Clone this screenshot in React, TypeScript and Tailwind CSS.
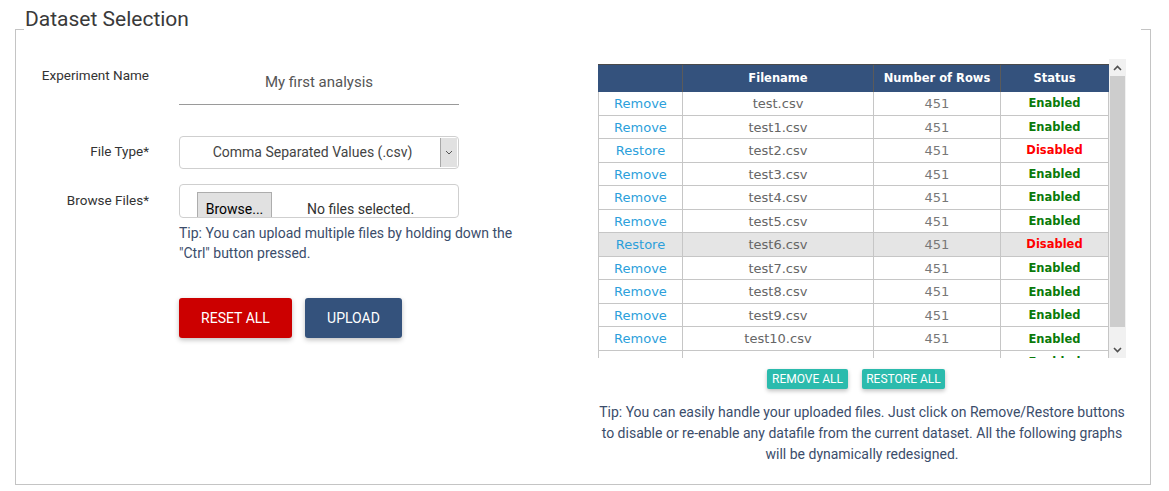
import React from "react";

const rows = [
  { action: "Remove", file: "test.csv", n: 451, on: true },
  { action: "Remove", file: "test1.csv", n: 451, on: true },
  { action: "Restore", file: "test2.csv", n: 451, on: false },
  { action: "Remove", file: "test3.csv", n: 451, on: true },
  { action: "Remove", file: "test4.csv", n: 451, on: true },
  { action: "Remove", file: "test5.csv", n: 451, on: true },
  { action: "Restore", file: "test6.csv", n: 451, on: false, hl: true },
  { action: "Remove", file: "test7.csv", n: 451, on: true },
  { action: "Remove", file: "test8.csv", n: 451, on: true },
  { action: "Remove", file: "test9.csv", n: 451, on: true },
  { action: "Remove", file: "test10.csv", n: 451, on: true },
  { action: "Remove", file: "test11.csv", n: 451, on: true },
];

export default function App() {
  return (
    <div className="w-[1169px] h-[491px] bg-white overflow-hidden font-['Roboto',sans-serif] text-[#333]">
      <div className="pl-[15px] pr-[18px]">
        {/* legend row */}
        <div className="flex h-[30px]">
          <div className="w-[9px] h-px mt-auto bg-[#c4c4c4]" />
          <div className="flex-1 pt-[6px] pl-px text-[21px] leading-[26px] text-[#3a3a3a]">Dataset Selection</div>
          <div className="w-[10px] h-px mt-auto bg-[#c4c4c4]" />
        </div>
        {/* box */}
        <div className="h-[455px] border-l border-r border-b border-[#c4c4c4] flex">
          {/* left column */}
          <div className="w-[567px] pt-[30px]">
            <div className="flex">
              <div className="w-[133px] text-right text-[13.5px] leading-[18px] pt-[6px] text-[#333]">Experiment Name</div>
              <div className="ml-[30px] w-[280px] h-[45px] border-b border-[#9a9a9a] flex items-center justify-center text-[15px] text-[#555]">
                My first analysis
              </div>
            </div>
            <div className="flex mt-[31px]">
              <div className="w-[133px] text-right text-[13.5px] leading-[18px] pt-[6px]">File Type*</div>
              <div className="ml-[30px] w-[280px] h-[33px] border border-[#cfcfcf] rounded-[4px] flex overflow-hidden">
                <div className="flex-1 flex items-center justify-center text-[14px] text-[#444] pl-[5px]">Comma Separated Values (.csv)</div>
                <div className="w-[17px] my-[1px] mr-[1px] bg-[#e1e1e1] border-l border-[#a8a8a8] flex items-center justify-center">
                  <svg width="8" height="5" viewBox="0 0 8 5">
                    <path d="M1 1 L4 4 L7 1" fill="none" stroke="#555" strokeWidth="1" />
                  </svg>
                </div>
              </div>
            </div>
            <div className="flex mt-[15px]">
              <div className="w-[133px] text-right text-[13.5px] leading-[18px] pt-[7px]">Browse Files*</div>
              <div className="ml-[30px]">
                <div className="w-[280px] h-[34px] border border-[#cfcfcf] rounded-[4px] overflow-hidden pt-[7px] pl-[17px] flex items-start">
                  <div className="w-[75px] h-[32px] bg-[#e1e1e1] border border-[#adadad] text-[14px] text-black flex items-start justify-center pt-[7px] leading-[18px]">
                    Browse...
                  </div>
                  <div className="ml-[35px] text-[14px] leading-[18px] pt-[8px] text-[#333]">No files selected.</div>
                </div>
                <div className="mt-[5px] text-[14px] leading-[20px] text-[#3b4d6b]">
                  Tip: You can upload multiple files by holding down the
                  <br />
                  "Ctrl" button pressed.
                </div>
                <div className="flex gap-[13px] mt-[35px]">
                  <div className="w-[113px] h-[40px] bg-[#cc0000] rounded-[3px] text-white text-[14px] flex items-center justify-center shadow-[0_2px_5px_rgba(0,0,0,0.25)]">
                    RESET ALL
                  </div>
                  <div className="w-[97px] h-[40px] bg-[#34527c] rounded-[3px] text-white text-[14px] flex items-center justify-center shadow-[0_2px_5px_rgba(0,0,0,0.25)]">
                    UPLOAD
                  </div>
                </div>
              </div>
            </div>
          </div>
          {/* right column */}
          <div className="pl-[15px] pt-[29px]">
            <div className="w-[528px] h-[299px] flex">
              <div className="w-[511px] h-full overflow-hidden pt-[5px] font-['DejaVu_Sans',sans-serif]">
                <div className="flex h-[28px] bg-[#34527d] border-t border-[#4a4a4a] text-white text-[11.5px] font-bold">
                  <div className="w-[85px] border-r border-[#5a5a5a]" />
                  <div className="w-[191px] border-r border-[#5a5a5a] flex items-center justify-center pt-px">Filename</div>
                  <div className="w-[127px] border-r border-[#5a5a5a] flex items-center justify-center pt-px">Number of Rows</div>
                  <div className="w-[107px] flex items-center justify-center pt-px">Status</div>
                </div>
                {rows.map((r) => (
                  <div
                    key={r.file}
                    className={`flex h-[23.55px] border-b border-l border-[#c6c6c6] text-[13px] ${r.hl ? "bg-[#e5e5e5]" : "bg-white"}`}
                  >
                    <div className="w-[84px] border-r border-[#c6c6c6] flex items-center justify-center pt-px text-[#2c9fdb]">{r.action}</div>
                    <div className="w-[191px] border-r border-[#c6c6c6] flex items-center justify-center pt-px text-[#666]">{r.file}</div>
                    <div className="w-[127px] border-r border-[#c6c6c6] flex items-center justify-center pt-px text-[#777]">{r.n}</div>
                    <div
                      className={`w-[108px] border-r border-[#c6c6c6] flex items-center justify-center pt-px font-bold text-[11.5px] ${r.on ? "text-[#0a7a0a]" : "text-[#ff0000]"}`}
                    >
                      {r.on ? "Enabled" : "Disabled"}
                    </div>
                  </div>
                ))}
              </div>
              {/* scrollbar */}
              <div className="w-[17px] h-full bg-[#f1f1f1] flex flex-col">
                <div className="h-[17px] flex items-center justify-center">
                  <svg width="9" height="6" viewBox="0 0 9 6">
                    <path d="M1 5 L4.5 1.5 L8 5" fill="none" stroke="#505050" strokeWidth="1.6" />
                  </svg>
                </div>
                <div className="h-[251px] mx-[1px] bg-[#cdcdcd]" />
                <div className="flex-1" />
                <div className="h-[17px] flex items-center justify-center">
                  <svg width="9" height="6" viewBox="0 0 9 6">
                    <path d="M1 1 L4.5 4.5 L8 1" fill="none" stroke="#505050" strokeWidth="1.6" />
                  </svg>
                </div>
              </div>
            </div>
            <div className="flex justify-center gap-[14px] mt-[11px] pr-[12px]">
              <div className="w-[81px] h-[20px] bg-[#2bbbad] rounded-[2px] text-white text-[12px] flex items-center justify-center shadow-[0_2px_4px_rgba(0,0,0,0.25)]">
                REMOVE ALL
              </div>
              <div className="w-[83px] h-[20px] bg-[#2bbbad] rounded-[2px] text-white text-[12px] flex items-center justify-center shadow-[0_2px_4px_rgba(0,0,0,0.25)]">
                RESTORE ALL
              </div>
            </div>
            <div className="w-[528px] mt-[13px] text-center text-[14px] leading-[21px] text-[#3b4d6b]">
              Tip: You can easily handle your uploaded files. Just click on Remove/Restore buttons
              <br />
              to disable or re-enable any datafile from the current dataset. All the following graphs
              <br />
              will be dynamically redesigned.
            </div>
          </div>
        </div>
      </div>
    </div>
  );
}
